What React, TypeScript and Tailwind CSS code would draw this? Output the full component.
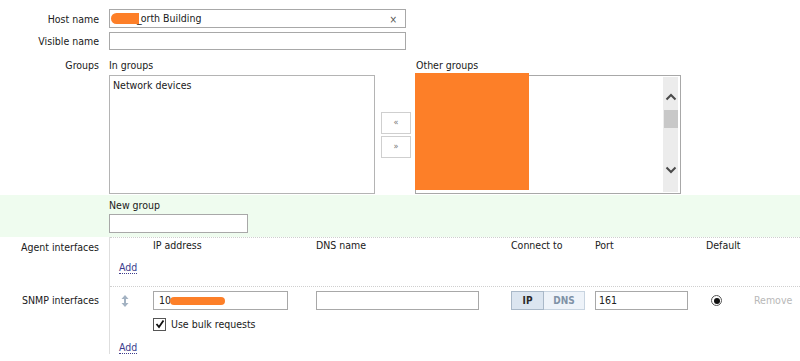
import React from "react";

const font = {
  fontFamily: '"DejaVu Sans Condensed", "DejaVu Sans", Tahoma, sans-serif',
};

function Label({ children, pt }: { children: React.ReactNode; pt: string }) {
  return (
    <div className={`w-[109px] shrink-0 pr-[10px] text-right leading-[14px] ${pt}`}>
      {children}
    </div>
  );
}

function Chevron({ up }: { up?: boolean }) {
  return (
    <svg width="12" height="8" viewBox="0 0 12 8">
      <path
        d={up ? "M1.5 6.5 L6 2 L10.5 6.5" : "M1.5 1.5 L6 6 L10.5 1.5"}
        fill="none"
        stroke="#4a4a4a"
        strokeWidth="2"
      />
    </svg>
  );
}

export default function App() {
  return (
    <div
      className="w-[800px] h-[361px] overflow-hidden bg-white text-[10.5px] text-[#202020]"
      style={font}
    >
      {/* Host name */}
      <div className="flex items-center pt-[9px]">
        <Label pt="">Host name</Label>
        <div className="relative flex h-[19px] w-[297px] items-center border border-[#a8a8a8] bg-white pl-[1px]">
          <span className="inline-block h-[11px] w-[28px] rounded-l-full rounded-r-[3px] bg-[#fd7f28]" />
          <span className="ml-[-2px]">_</span>
          <span className="ml-[-1px]">orth Building</span>
          <span className="absolute right-[8px] top-[2px] text-[10px] text-[#555]">×</span>
        </div>
      </div>

      {/* Visible name */}
      <div className="mt-[4px] flex items-center">
        <Label pt="">Visible name</Label>
        <div className="h-[18px] w-[297px] border border-[#a8a8a8] bg-white" />
      </div>

      {/* Groups */}
      <div className="mt-[8px] flex">
        <Label pt="">Groups</Label>
        <div className="flex">
          <div className="flex flex-col">
            <div className="h-[14px] leading-[14px]">In groups</div>
            <div className="mt-[3px] h-[119px] w-[266px] border border-[#b4b4b4] px-[3px] py-[2px] leading-[14px]">
              Network devices
            </div>
          </div>
          <div className="ml-[6px] mt-[54px] flex flex-col gap-[2px] self-start">
            <div className="flex h-[22px] w-[30px] items-center justify-center border border-[#cfcfcf] text-[9px] text-[#777]">
              «
            </div>
            <div className="flex h-[22px] w-[30px] items-center justify-center border border-[#cfcfcf] text-[9px] text-[#777]">
              »
            </div>
          </div>
          <div className="ml-[4px] flex flex-col">
            <div className="h-[14px] pl-[1px] leading-[14px]">Other groups</div>
            <div className="relative mt-[3px] flex h-[119px] w-[266px] justify-end border border-[#a8a8a8] py-[1px] pr-[2px]">
              <div className="absolute left-[-1px] top-[-3px] h-[117px] w-[114px] bg-[#fd7f28]" />
              <div className="flex w-[15px] flex-col items-center bg-[#ececec]">
                <div className="mt-[16px]">
                  <Chevron up />
                </div>
                <div className="mt-[9px] h-[18px] w-[14px] bg-[#c8c8c8]" />
                <div className="mt-[38px]">
                  <Chevron />
                </div>
              </div>
            </div>
          </div>
        </div>
      </div>

      {/* New group band */}
      <div className="mt-[1px] h-[42px] bg-[#effcef] pl-[109px] pt-[3px]">
        <div className="h-[14px] leading-[14px]">New group</div>
        <div className="mt-[2px] h-[19px] w-[139px] border border-[#a8a8a8] bg-white" />
      </div>

      {/* Interfaces */}
      <div className="flex">
        <div className="w-[109px] shrink-0">
          <div className="h-[49px] pr-[10px] pt-[3px] text-right leading-[14px]">
            Agent interfaces
          </div>
          <div className="pr-[10px] pt-[7px] text-right leading-[14px]">SNMP interfaces</div>
        </div>
        <div className="flex-1 border-l border-[#dedede]">
          {/* Agent */}
          <div className="h-[49px] border-t border-dotted border-[#cfcfcf]">
            <div className="flex h-[14px] leading-[14px]">
              <div className="w-[43px]" />
              <div className="w-[163px]">IP address</div>
              <div className="w-[195px]">DNS name</div>
              <div className="w-[84px]">Connect to</div>
              <div className="w-[111px]">Port</div>
              <div className="w-[48px]">Default</div>
            </div>
            <div className="mt-[8px] pl-[9px] leading-[14px]">
              <span className="border-b border-dotted border-[#3c3c8c] text-[#3c3c8c]">Add</span>
            </div>
          </div>
          {/* SNMP */}
          <div className="border-t border-dotted border-[#cfcfcf] pt-[4px]">
            <div className="flex h-[19px] items-center">
              <div className="w-[43px] pl-[11px]">
                <svg width="8" height="12" viewBox="0 0 8 12">
                  <path d="M4 0 L7.5 4 L0.5 4 Z M4 12 L7.5 8 L0.5 8 Z" fill="#a3b2c2" />
                  <rect x="3" y="4" width="2" height="4" fill="#a3b2c2" />
                </svg>
              </div>
              <div className="w-[163px]">
                <div className="flex h-[19px] w-[135px] items-center border border-[#a8a8a8] pl-[5px]">
                  <span>10</span>
                  <span className="ml-[-1px] inline-block h-[8px] w-[55px] rounded-full bg-[#fd7f28]" />
                </div>
              </div>
              <div className="w-[195px]">
                <div className="h-[19px] w-[163px] border border-[#a8a8a8]" />
              </div>
              <div className="w-[84px]">
                <div className="flex h-[19px] w-[74px] text-[10px] font-bold">
                  <div className="flex w-[33px] items-center justify-center border border-[#a9b8c8] bg-[#dbe5f0] text-[#2a2a2a]">
                    IP
                  </div>
                  <div className="flex flex-1 items-center justify-center border border-l-0 border-[#c8d4e0] bg-[#eef3f9] text-[#7f92a6]">
                    DNS
                  </div>
                </div>
              </div>
              <div className="w-[111px]">
                <div className="flex h-[19px] w-[93px] items-center border border-[#a8a8a8] pl-[3px]">
                  161
                </div>
              </div>
              <div className="w-[48px] pl-[5px]">
                <div className="flex h-[11px] w-[11px] items-center justify-center rounded-full border border-[#555] bg-white">
                  <div className="h-[6px] w-[6px] rounded-full bg-[#111]" />
                </div>
              </div>
              <div className="text-[#b8b8b8]">Remove</div>
            </div>
            <div className="mt-[7px] flex items-center pl-[43px]">
              <div className="flex h-[13px] w-[13px] items-center justify-center border border-[#555] bg-white">
                <svg width="10" height="10" viewBox="0 0 10 10">
                  <path d="M1.5 5 L4 8 L8.5 1.5" fill="none" stroke="#111" strokeWidth="1.8" />
                </svg>
              </div>
              <span className="ml-[5px] leading-[14px]">Use bulk requests</span>
            </div>
            <div className="mt-[9px] pl-[9px] leading-[14px]">
              <span className="border-b border-dotted border-[#3c3c8c] text-[#3c3c8c]">Add</span>
            </div>
          </div>
        </div>
      </div>
    </div>
  );
}
